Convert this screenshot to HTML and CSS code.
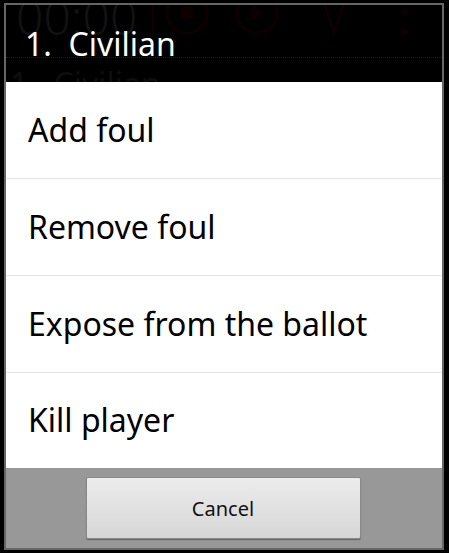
FILE: index.html
```html
<!DOCTYPE html>
<html>
<head>
<meta charset="utf-8">
<link rel="stylesheet" href="styles.css">
</head>
<body>
<div class="frame">
  <div class="title">
    <div class="ghost">
      <span class="ghost-time">00:00</span>
      <svg class="ghost-icons" width="290" height="40" viewBox="0 0 290 40">
        <line x1="4" y1="0" x2="4" y2="34" stroke="#0e0000" stroke-width="2"/>
        <circle cx="38" cy="10" r="20" fill="none" stroke="#0e0000" stroke-width="3"/>
        <circle cx="38" cy="10" r="7" fill="#0e0000"/>
        <circle cx="108" cy="10" r="20" fill="none" stroke="#0e0000" stroke-width="3"/>
        <path d="M102 2 L116 10 L102 18 Z" fill="#0e0000"/>
        <path d="M175 0 L185 30 L195 0" fill="none" stroke="#0e0000" stroke-width="3"/>
        <rect x="253" y="6" width="6" height="6" fill="#0e0000"/>
        <rect x="253" y="26" width="6" height="6" fill="#0e0000"/>
      </svg>
    </div>
    <div class="ghost-line"></div>
    <span class="ghost-name">1.&nbsp;&nbsp;Civilian</span>
    <h1 class="title-text">1.&nbsp;&nbsp;Civilian</h1>
  </div>
  <ul class="menu">
    <li class="item">Add foul</li>
    <li class="item">Remove foul</li>
    <li class="item">Expose from the ballot</li>
    <li class="item">Kill player</li>
  </ul>
  <div class="buttons">
    <button class="btn">Cancel</button>
  </div>
</div>
</body>
</html>
```
FILE: styles.css
```css
html, body {
  margin: 0;
  padding: 0;
  background: #000;
  width: 449px;
  height: 553px;
  overflow: hidden;
}
.frame {
  margin: 3px 0 0 4px;
  width: 436px;
  height: 543px;
  border: 2px solid #666;
  display: flex;
  flex-direction: column;
  background: #000;
  font-family: "Noto Sans", "Open Sans", sans-serif;
}
.title {
  position: relative;
  height: 77px;
  background: #000;
  overflow: hidden;
  flex: none;
}
.ghost {
  position: absolute;
  left: 10px;
  top: -12px;
  display: flex;
  align-items: flex-start;
  gap: 12px;
}
.ghost-time {
  font-size: 48px;
  font-weight: 300;
  color: #121212;
  line-height: 1;
}
.ghost-icons {
  margin-top: 10px;
}
.ghost-line {
  position: absolute;
  left: 0;
  right: 0;
  top: 52px;
  border-top: 1px dotted #1c1c1c;
}
.ghost-name {
  position: absolute;
  left: 4px;
  top: 60px;
  font-size: 32px;
  color: #0e0e0e;
  line-height: 1.2;
}
.title-text {
  position: absolute;
  left: 19px;
  top: 20px;
  margin: 0;
  font-size: 32px;
  font-weight: normal;
  color: #fff;
  line-height: 1.2;
}
.menu {
  list-style: none;
  margin: 0;
  padding: 0;
  background: #fff;
  flex: none;
}
.item {
  display: flex;
  align-items: center;
  padding-left: 21px;
  font-size: 32px;
  color: #000;
  border-bottom: 1px solid #e2e2e2;
  margin: 0 1px;
  padding-bottom: 2px;
  box-sizing: border-box;
  height: 97px;
}
.item:last-child {
  border-bottom: none;
  height: 95px;
}
.buttons {
  flex: 1;
  background: #989898;
  display: flex;
  justify-content: center;
  padding-top: 9px;
  box-sizing: border-box;
}
.btn {
  width: 275px;
  height: 62px;
  border: 1px solid #8a8a8a;
  border-radius: 2px;
  background: linear-gradient(#ececec, #d6d6d6);
  box-shadow: 0 1px 1px rgba(0,0,0,0.35);
  font-family: "Noto Sans", "Open Sans", sans-serif;
  font-size: 20px;
  color: #111;
  margin-left: -2px;
  padding: 0;
}
```
